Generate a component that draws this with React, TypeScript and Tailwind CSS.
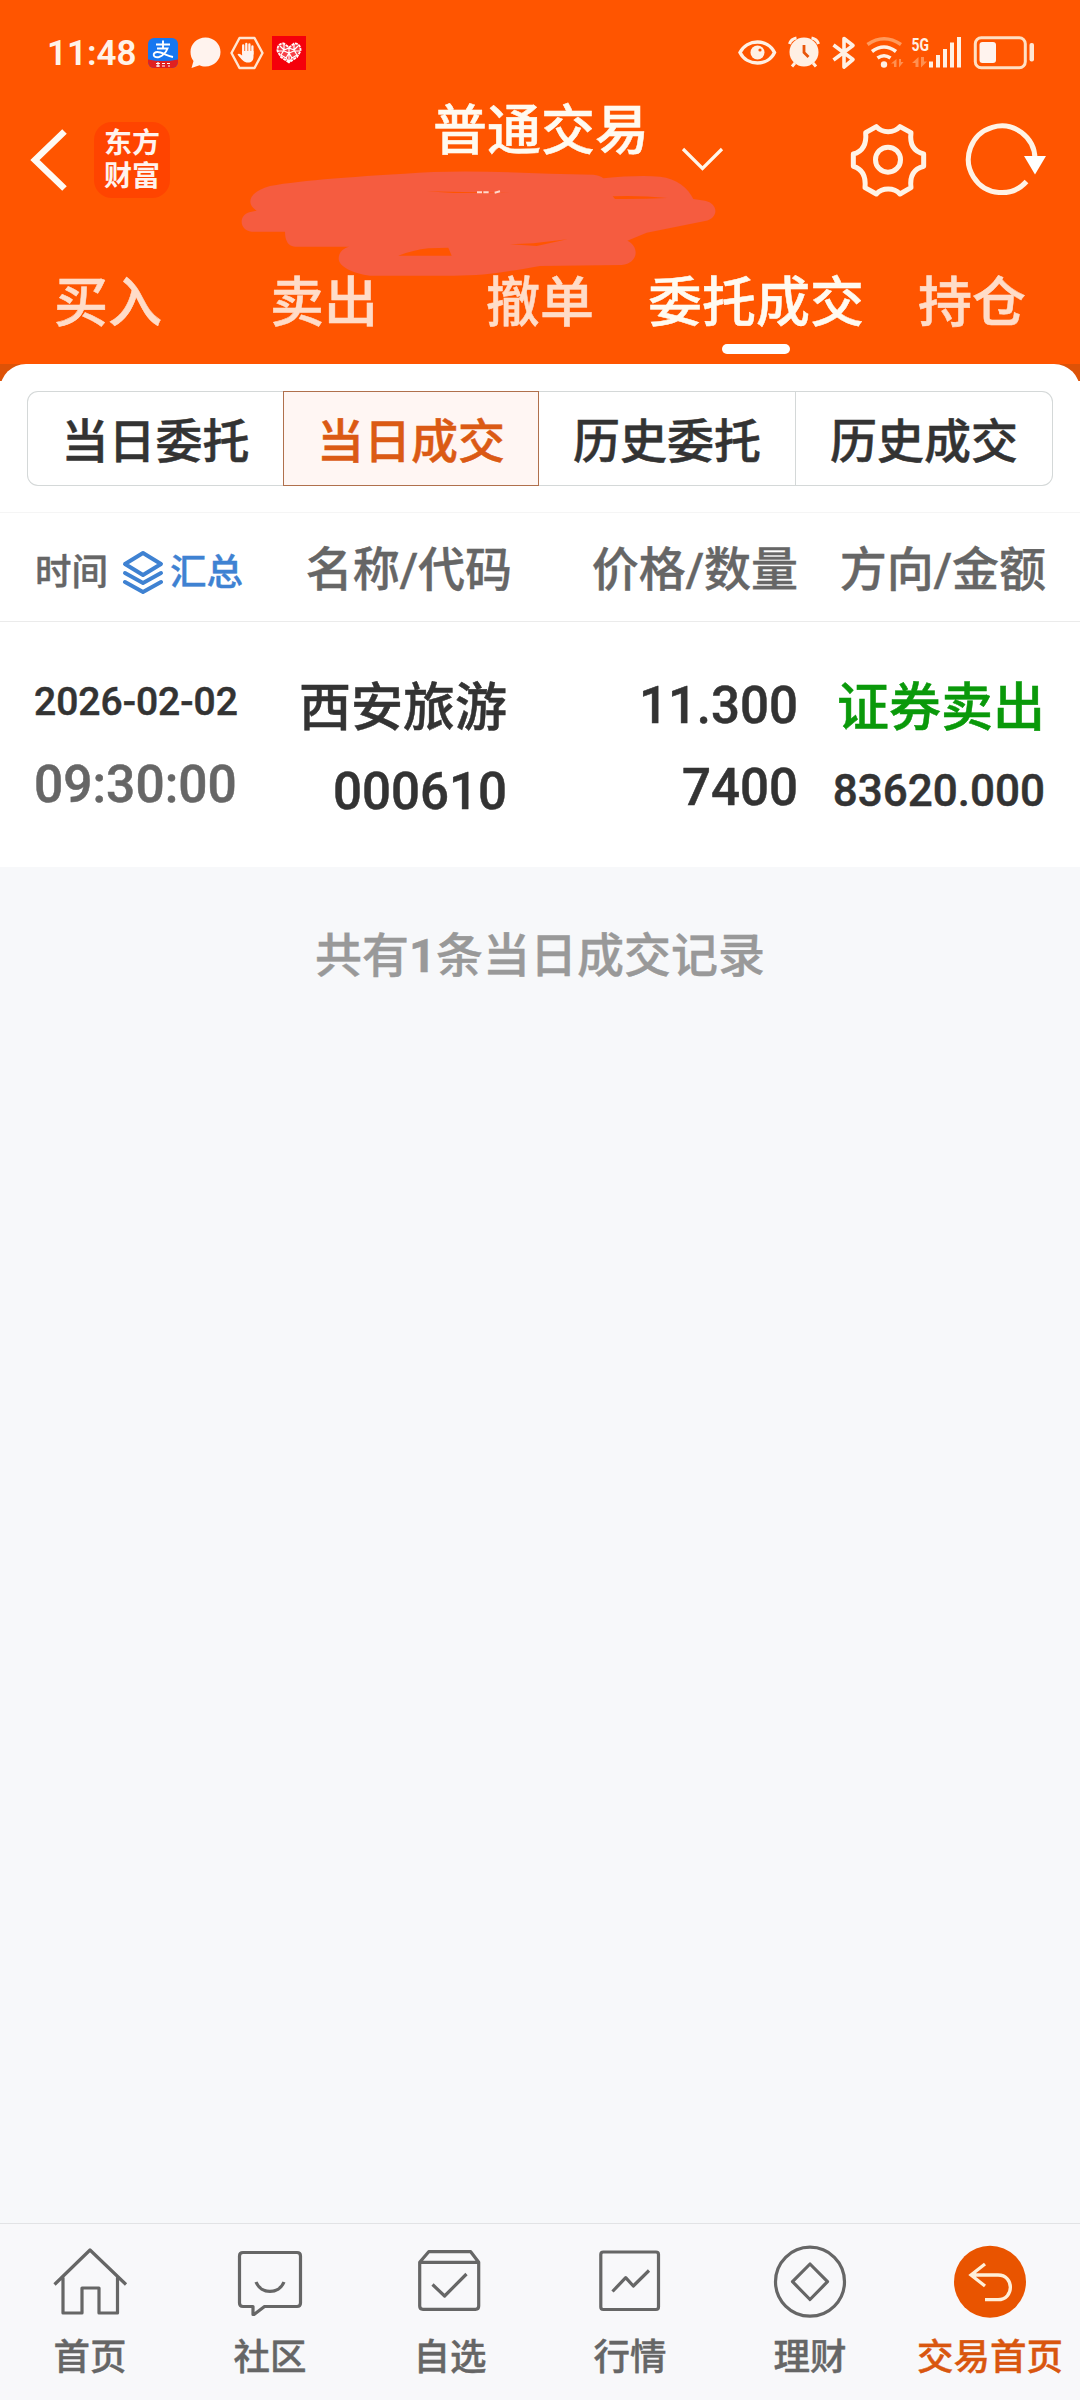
import { clsx } from "clsx";
import type { ReactNode } from "react";

const tabs = ["买入", "卖出", "撤单", "委托成交", "持仓"];
const segments = ["当日委托", "当日成交", "历史委托", "历史成交"];

function StatusBar() {
  return (
    <div className="flex h-[106px] items-center justify-between pr-[46px] pl-[48px]">
      <div className="flex items-center">
        <span className="w-[100px] text-[35px] leading-[40px] font-semibold text-[#fff3e8]">
          <span className="relative -left-px top-px">11:48</span>
        </span>
        <svg width="30" height="30" viewBox="0 0 30 30">
          <clipPath id="pay">
            <rect width="30" height="30" rx="6" />
          </clipPath>
          <g clipPath="url(#pay)">
            <rect width="30" height="30" fill="#1677f0" />
            <path d="M0 21.500Q15 24.500 30 21.500V30H0Z" fill="#e02020" />
          </g>
          <g fill="none" stroke="#fff" strokeWidth="1.900">
            <path d="M8 6.500H22M15 2.500V10.500M9 10.500H19.500Q17 17 11 19C4.500 20.500 4 14 9.500 14C14 14 19 18 25 19" />
          </g>
          <path d="M8 25.500H12M8 28H12M10 24V29M14 25.500H17M14 28H17M19 25.500H22M20 28H22" stroke="#fff" strokeWidth="1.200" />
        </svg>
        <svg className="ml-[12px]" width="31" height="32" viewBox="0 0 31 32">
          <path
            d="M15.500 0.500C24 0.500 30.500 7 30.500 15S24 29.500 15.500 29.500C13 29.500 11 29 9.500 28.200L1.500 31L3.500 24C1.500 21.500 0.500 18.500 0.500 15C0.500 7 7 0.500 15.500 0.500Z"
            fill="#fff3ee"
          />
        </svg>
        <svg className="ml-[9px]" width="34" height="34" viewBox="0 0 34 34">
          <path
            d="M9.500 2H24.500L32.500 17L24.500 32H9.500L1.500 17Z"
            fill="none"
            stroke="#ffe6d2"
            strokeWidth="2.400"
            strokeLinejoin="round"
          />
          <path
            d="M13.200 17V9.500M16.300 17V8M19.400 17V8.500M22.400 18V10.500"
            stroke="#fff3ee"
            strokeWidth="2.300"
            strokeLinecap="round"
          />
          <path d="M12.100 15H23.500V20.500C23.500 24.500 21.500 26.500 18 26.500C14 26.500 12 24 7.500 18.500Q9 16.500 12.100 19.500Z" fill="#fff3ee" />
        </svg>
        <svg className="ml-[8px]" width="34" height="34" viewBox="0 0 34 34">
          <rect width="34" height="34" fill="#f5000b" />
          <path
            d="M17 26.500L9 21L5.500 15C5 10 8 7 12 7.500L17 11.500L22 7.500C26 7 29 10 28.500 15L25 21Z"
            fill="#fff"
            fillOpacity="0.250"
            stroke="#fff"
            strokeWidth="1.800"
            strokeDasharray="3 0.800"
          />
          <path
            d="M8 10L12 14L17 12L22 14L26 10M12 8V14L9 19L14 22L17 17L20 22L25 19L22 14V8M6 15H12L17 17L22 15H28M14 22L17 26L20 22M17 12V26"
            fill="none"
            stroke="#fff"
            strokeWidth="1.200"
          />
        </svg>
      </div>

      <svg width="300" height="50" viewBox="734 28 300 50">
        <g fill="none" stroke="#fff0e4" strokeWidth="3.400">
          <path d="M740 52.500C747 38.500 768 38.500 774.500 52.500C768 66.500 747 66.500 740 52.500Z" />
        </g>
        <circle cx="757.500" cy="52.500" r="7" fill="#fff0e4" />
        <circle cx="760" cy="50" r="1.600" fill="#ff5500" />

        <circle cx="804" cy="52" r="14.500" fill="#fff0e4" />
        <path
          d="M789.500 44Q791 39 796.500 38M811.500 38Q817 39 818.500 44M795 63L792 66.500M813 63L816 66.500"
          stroke="#fff0e4"
          strokeWidth="3"
          fill="none"
        />
        <path d="M804 45V52.500L808.500 57" stroke="#e8560a" strokeWidth="2.800" fill="none" />

        <path
          d="M833.500 45L853 59.500L844 67V38.500L853 45.500L833.500 60"
          stroke="#fff0e4"
          strokeWidth="3.600"
          fill="none"
          strokeLinejoin="round"
        />

        <g fill="none" strokeWidth="3.600">
          <path d="M867.500 44.500Q884 33 901 44.500" stroke="#ff9a5c" />
          <path d="M872 51.500Q884 42.500 896 51.500" stroke="#fff0e4" />
          <path d="M877.500 58Q884 53.500 890.500 58" stroke="#fff0e4" />
        </g>
        <circle cx="884" cy="64.500" r="3.200" fill="#fff0e4" />
        <path
          d="M891 63.500L896.500 59V67H894V63.500ZM899 59H901V62H903.500L899 67.500ZM912 63L918.500 57V67H915.500V63ZM921 57H924V61.500H927L921 67.500Z"
          fill="#ff9050"
        />
        <text
          x="911.500"
          y="50.500"
          fill="#fff0e4"
          className="text-[19px] leading-[20px] font-bold"
          textLength="17.500"
          lengthAdjust="spacingAndGlyphs"
        >
          5G
        </text>
        <path
          d="M931 61.500V67.500M938 55V67.500M945 49V67.500M952 42.500V67.500M959 37V67.500"
          stroke="#fff0e4"
          strokeWidth="4"
        />
        <rect x="975.300" y="37.800" width="50" height="30" rx="6" fill="none" stroke="#ffe0c4" strokeWidth="3" />
        <rect x="979.500" y="42" width="16.500" height="21" rx="3" fill="#fff3ee" />
        <rect x="1029.500" y="43" width="4.500" height="18.500" rx="2" fill="#ffe6d2" />
      </svg>
    </div>
  );
}

function Scribble() {
  return (
    <svg
      className="pointer-events-none absolute top-[80px] left-[220px]"
      width="520"
      height="220"
      viewBox="0 0 1560 660"
    >
      <path
        fill="#f55c40"
        fillRule="evenodd"
        d="M150 318C250 300 400 290 640 276C800 270 950 282 1120 284Q1140 286 1150 295Q1250 285 1320 290C1370 295 1405 325 1420 357L1455 362C1496 370 1497 415 1455 423L1280 458L1222 482C1260 500 1255 550 1205 555L960 558C860 575 800 587 700 587L450 587C400 582 355 560 356 535C357 515 370 505 388 500L225 500Q195 497 195 455L95 455C55 450 55 400 95 395L110 392C80 375 80 338 150 318ZM1178 349Q1260 346 1342 354Q1260 358 1185 357ZM535 527Q580 510 625 505L685 503L695 527ZM870 493L940 490L1042 478L950 498ZM620 334L880 339L700 339Z"
      />
      <path d="M771 337H786M790 337H806M824 338L840 334" stroke="#ffd9cc" strokeWidth="6" />
    </svg>
  );
}

function TitleBar() {
  return (
    <div className="flex h-[148px] items-start">
      <svg className="mt-[20px] ml-[29px]" width="40" height="68" viewBox="0 0 40 68">
        <path d="M35.500 5.500L6 34L35.500 62.500" fill="none" stroke="#fffaf4" strokeWidth="6.500" />
      </svg>
      <div className="mt-[16px] ml-[25px] flex h-[76px] w-[76px] flex-col items-center justify-center rounded-[18px] bg-[#ff4400] text-[28px] leading-[33px] font-bold text-[#fff3ee]">
        <span>东方</span>
        <span>财富</span>
      </div>
      <h1 className="-mt-[7px] ml-[263px] w-[216px] text-[54px] leading-[66px] font-medium whitespace-nowrap text-[#fffaf0] [-webkit-text-stroke:0.5px]">
        普通交易
      </h1>
      <svg className="mt-[39px] ml-[31px]" width="46" height="28" viewBox="680 145 46 28">
        <path d="M683 149L702.500 168.500L722 149" fill="none" stroke="#fff6ea" strokeWidth="3.200" />
      </svg>
      <svg className="mt-[15px] ml-[123px]" width="78" height="78" viewBox="450 361 234 234">
        <path
          d="M532 378L500 396C503 429 493 452 463 460L463 497C491 505 501 530 498 561L532 580C550 560 585 560 603 580L636 561C632 530 642 505 674 497L674 460C642 452 632 427 636 396L603 378C585 398 550 398 532 378Z"
          fill="none"
          stroke="#fff3e6"
          strokeWidth="15"
          strokeLinejoin="round"
        />
        <circle cx="567" cy="477" r="37.500" fill="none" stroke="#fff3e6" strokeWidth="15" />
      </svg>
      <svg className="mt-[15px] ml-[37px]" width="84" height="78" viewBox="964 121 84 78">
        <path d="M1035 159A33.300 33.300 0 1 0 1026.500 181.500" fill="none" stroke="#fff3e6" strokeWidth="5" />
        <path d="M1024 156H1046L1035 174.500Z" fill="#fff" />
      </svg>
    </div>
  );
}

function Header() {
  return (
    <header className="relative h-[364px] bg-[#ff5500]">
      <Scribble />
      <StatusBar />
      <TitleBar />
      <nav className="relative grid grid-cols-5">
        {tabs.map((tab) => {
          const active = tab === "委托成交";
          return (
            <div
              key={tab}
              className={clsx(
                "flex flex-col items-center pt-[15px] text-[54px] leading-[70px] font-medium whitespace-nowrap [-webkit-text-stroke:0.5px]",
                active ? "text-[#fffaf0]" : "text-[#ffdcc8]",
              )}
            >
              {tab}
              {active && <span className="mt-[5px] h-[10px] w-[68px] rounded-full bg-white" />}
            </div>
          );
        })}
      </nav>
    </header>
  );
}

function Segments() {
  return (
    <div className="bg-[linear-gradient(#dd5207_17px,#ffffff_17px)]">
      <div className="h-[149px] rounded-t-[26px] border-b border-[#f5f5f5] bg-white px-[27px] pt-[27px]">
        <div className="flex h-[95px]">
          {segments.map((name, i) => (
            <div
              key={name}
              className={clsx(
                "flex items-center justify-center border pt-[8px] text-[47px] font-medium [-webkit-text-stroke:0.5px]",
                i === 1
                  ? "border-[#b0704c] bg-[#fff6f3] text-[#db5a14]"
                  : "border-[#d4d8d8] text-[#333333]",
                i === 0 && "w-[256px] rounded-l-[11px] border-r-0",
                i === 1 && "w-[256px]",
                i === 2 && "w-[257px] border-l-0",
                i === 3 && "w-[257px] rounded-r-[11px] border-l-0",
              )}
            >
              {name}
            </div>
          ))}
        </div>
      </div>
    </div>
  );
}

function TableHeader() {
  return (
    <div className="flex h-[109px] items-center border-b border-[#ebebeb] pr-[34px] pl-[35px] text-[47px] font-medium text-[#666666] [-webkit-text-stroke:0.4px]">
      <div className="flex w-[216px] items-center pt-[13px] text-[36.500px]">
        时间
        <svg className="mb-[4px] ml-[14px]" width="42" height="44" viewBox="0 0 42 44">
          <g fill="none" stroke="#3f82d2" strokeWidth="4" strokeLinejoin="round" strokeLinecap="round">
            <path d="M21 3L39 14L21 25L3 14Z" />
            <path d="M3 23L21 33L39 23" />
            <path d="M3 32L21 42L39 32" />
          </g>
        </svg>
        <span className="ml-[6px] text-[#3f82d2]">汇总</span>
      </div>
      <div className="w-[261px] pt-[6px] text-right">名称/代码</div>
      <div className="w-[286px] pt-[6px] text-right">价格/数量</div>
      <div className="flex-1 pt-[6px] text-right">方向/金额</div>
    </div>
  );
}

function TradeRow() {
  return (
    <div className="flex h-[245px] pr-[35px] pl-[34px] text-[51px] leading-[60px] font-medium text-[#333333] [-webkit-text-stroke:0.5px]">
      <div className="w-[215px] pt-[50px]">
        <div className="text-[39px]">2026-02-02</div>
        <div className="mt-[23px] text-[51.500px] text-[#666666]">09:30:00</div>
      </div>
      <div className="w-[258px] pt-[57px] text-right">
        <div className="-ml-[4px] text-[52px]">西安旅游</div>
        <div className="mt-[23px]">000610</div>
      </div>
      <div className="w-[291px] pt-[54px] text-right">
        <div>11.300</div>
        <div className="mt-[22px]">7400</div>
      </div>
      <div className="flex-1 pt-[57px] text-right">
        <div className="text-[52px] text-[#0a990a]">证券卖出</div>
        <div className="mt-[22px] text-[44px]">83620.000</div>
      </div>
    </div>
  );
}

function NavItem({ label, active, children }: { label: string; active?: boolean; children: ReactNode }) {
  return (
    <div
      className={clsx(
        "flex flex-col items-center pt-[20px] text-[36.500px] leading-[48px] font-medium",
        active ? "text-[#d9560f]" : "text-[#666666]",
      )}
    >
      <svg
        width="76"
        height="76"
        viewBox="0 0 76 76"
        fill="none"
        stroke="#666666"
        strokeWidth="3.200"
        strokeLinejoin="round"
      >
        {children}
      </svg>
      <span className="mt-[14px] [-webkit-text-stroke:0.4px]">{label}</span>
    </div>
  );
}

function BottomNav() {
  return (
    <nav className="grid h-[177px] grid-cols-6 border-t border-[#e2e3e5] bg-[#f8f8fa]">
      <NavItem label="首页">
        <path d="M2.500 40.500L38 6L74 40.500M11 33.500V69H30V44H47V69H65.500V33.500" />
      </NavItem>
      <NavItem label="社区">
        <path d="M11 8.500H65Q68.500 8.500 68.500 12V59Q68.500 62.500 65 62.500H32.500L22 70.500H21V62.500H11Q7.500 62.500 7.500 59V12Q7.500 8.500 11 8.500Z" />
        <path d="M24 38C29 50.500 47 50.500 52 38" />
      </NavItem>
      <NavItem label="自选">
        <path d="M7.700 18.300L16.700 7.700H58.700L66.700 18.300V62Q66.700 65.300 63.500 65.300H11Q7.700 65.300 7.700 62ZM7.700 18.300H66.700" />
        <path d="M20.500 40.500L32.600 52L54.500 30" />
      </NavItem>
      <NavItem label="行情">
        <rect x="8.800" y="8" width="57.700" height="57.500" rx="2.500" />
        <path d="M20.500 47.500L33.700 33.700L41.300 42L57 26.500" />
      </NavItem>
      <NavItem label="理财">
        <circle cx="38" cy="37.700" r="34.500" />
        <path d="M38 20L55.500 37.700L38 55.500L20.500 37.700Z" />
      </NavItem>
      <NavItem label="交易首页" active>
        <circle cx="38" cy="37.700" r="36" fill="#e95400" stroke="none" />
        <path d="M33 20L19 31L33 42M19 31H46C62.500 31 62.500 55.700 46 55.700H33" stroke="#ffefd8" strokeWidth="3.300" strokeLinejoin="miter" />
      </NavItem>
    </nav>
  );
}

export default function App() {
  return (
    <div className="flex h-[2400px] w-[1080px] flex-col overflow-hidden bg-[#f7f8fa] font-[Roboto,'Noto_Sans_CJK_SC',sans-serif]">
      <Header />
      <main className="flex-1">
        <section className="bg-white">
          <Segments />
          <TableHeader />
          <TradeRow />
        </section>
        <p className="pt-[56px] text-center text-[47px] leading-[66px] font-medium text-[#999999] [-webkit-text-stroke:0.4px]">
          共有<span className="font-bold">1</span>条当日成交记录
        </p>
      </main>
      <BottomNav />
    </div>
  );
}
